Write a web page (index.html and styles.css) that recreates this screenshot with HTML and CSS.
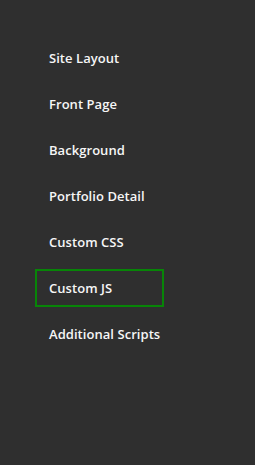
FILE: index.html
```html
<!DOCTYPE html>
<html lang="en">
<head>
    <meta charset="UTF-8">
    <title>Customizer</title>
    <link rel="stylesheet" href="styles.css">
</head>
<body>
<nav class="panel">
    <ul class="panel__list">
        <li><a class="panel__item" href="#">Site Layout</a></li>
        <li><a class="panel__item" href="#">Front Page</a></li>
        <li><a class="panel__item" href="#">Background</a></li>
        <li><a class="panel__item" href="#">Portfolio Detail</a></li>
        <li><a class="panel__item" href="#">Custom CSS</a></li>
        <li><a class="panel__item panel__item--active" href="#">Custom JS</a></li>
        <li><a class="panel__item" href="#">Additional Scripts</a></li>
    </ul>
</nav>
</body>
</html>
```

FILE: styles.css
```css
html,
body {
  height: 100%;
}

body {
  margin: 0;
  padding: 0;
  background-color: #2f2f2f;
  font-family: "Open Sans", Arial, sans-serif;
}

.panel {
  padding: 39px 0 0 35px;
}

.panel__list {
  list-style: none;
  margin: 0;
  padding: 0;
  display: flex;
  flex-direction: column;
  gap: 8px;
}

.panel__item {
  display: block;
  box-sizing: border-box;
  width: 129px;
  height: 38px;
  padding: 0 12px;
  border: 2px solid transparent;
  color: #f6f6f6;
  font-size: 13px;
  font-weight: 600;
  letter-spacing: 0.05px;
  line-height: 34px;
  text-decoration: none;
  white-space: nowrap;
}

.panel__item--active {
  border-color: #078507;
}
```
